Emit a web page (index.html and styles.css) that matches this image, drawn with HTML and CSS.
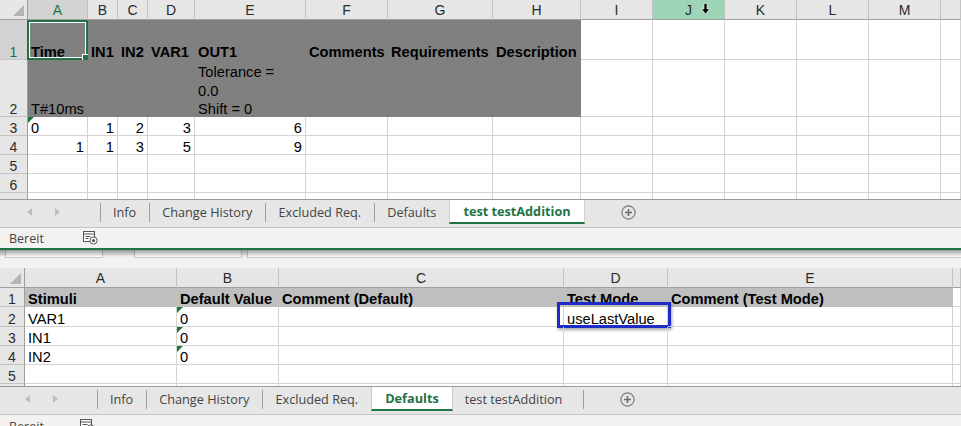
FILE: index.html
```html
<!DOCTYPE html>
<html lang="de">
<head>
<meta charset="utf-8">
<title>Excel</title>
<link rel="stylesheet" href="styles.css">
</head>
<body>
<div class="win win-top">
  <div class="sheet sheet-top">
    <div class="corner"><span class="tri"></span></div>
    <div class="ch act">A</div><div class="ch">B</div><div class="ch">C</div><div class="ch">D</div><div class="ch">E</div><div class="ch">F</div><div class="ch">G</div><div class="ch">H</div><div class="ch">I</div>
    <div class="ch hot">J<svg class="cursor" width="9" height="12" viewBox="0 0 9 12"><path d="M3 0.5h3v5.5h2.5l-4 5-4-5h2.5z" fill="#000" stroke="#fff" stroke-width="0.6"/></svg></div>
    <div class="ch">K</div><div class="ch">L</div><div class="ch">M</div><div class="ch"></div>

    <div class="rh act">1</div>
    <div class="c f b">Time<span class="sel"></span></div><div class="c f b">IN1</div><div class="c f b">IN2</div><div class="c f b">VAR1</div><div class="c f b">OUT1</div><div class="c f b">Comments</div><div class="c f b">Requirements</div><div class="c f b">Description</div>
    <div class="c"></div><div class="c"></div><div class="c"></div><div class="c"></div><div class="c"></div><div class="c"></div>

    <div class="rh">2</div>
    <div class="c f">T#10ms</div><div class="c f"></div><div class="c f"></div><div class="c f"></div><div class="c f wrap"><span>Tolerance =<br>0.0<br>Shift = 0</span></div><div class="c f"></div><div class="c f"></div><div class="c f"></div>
    <div class="c"></div><div class="c"></div><div class="c"></div><div class="c"></div><div class="c"></div><div class="c"></div>

    <div class="rh">3</div>
    <div class="c warn">0</div><div class="c r">1</div><div class="c r">2</div><div class="c r">3</div><div class="c r">6</div>
    <div class="c"></div><div class="c"></div><div class="c"></div><div class="c"></div><div class="c"></div><div class="c"></div><div class="c"></div><div class="c"></div><div class="c"></div>

    <div class="rh">4</div>
    <div class="c r">1</div><div class="c r">1</div><div class="c r">3</div><div class="c r">5</div><div class="c r">9</div>
    <div class="c"></div><div class="c"></div><div class="c"></div><div class="c"></div><div class="c"></div><div class="c"></div><div class="c"></div><div class="c"></div><div class="c"></div>

    <div class="rh">5</div>
    <div class="c"></div><div class="c"></div><div class="c"></div><div class="c"></div><div class="c"></div><div class="c"></div><div class="c"></div><div class="c"></div><div class="c"></div><div class="c"></div><div class="c"></div><div class="c"></div><div class="c"></div><div class="c"></div>

    <div class="rh">6</div>
    <div class="c"></div><div class="c"></div><div class="c"></div><div class="c"></div><div class="c"></div><div class="c"></div><div class="c"></div><div class="c"></div><div class="c"></div><div class="c"></div><div class="c"></div><div class="c"></div><div class="c"></div><div class="c"></div>

    <div class="rh">7</div>
    <div class="c"></div><div class="c"></div><div class="c"></div><div class="c"></div><div class="c"></div><div class="c"></div><div class="c"></div><div class="c"></div><div class="c"></div><div class="c"></div><div class="c"></div><div class="c"></div><div class="c"></div><div class="c"></div>
  </div>

  <div class="tabbar">
    <div class="nav"><span class="arr-l"></span><span class="arr-r"></span></div>
    <span class="sep"></span>
    <div class="tab">Info</div>
    <span class="sep"></span>
    <div class="tab">Change History</div>
    <span class="sep"></span>
    <div class="tab">Excluded Req.</div>
    <span class="sep"></span>
    <div class="tab">Defaults</div>
    <div class="tab on">test testAddition</div>
    <svg class="plus" width="15" height="15" viewBox="0 0 15 15"><circle cx="7.5" cy="7.5" r="6.6" fill="none" stroke="#7b7b7b" stroke-width="1.2"/><path d="M7.5 4v7M4 7.5h7" stroke="#6b6b6b" stroke-width="1.6"/></svg>
  </div>

  <div class="status status-top">
    <span class="st-text">Bereit</span>
    <svg width="15" height="14" viewBox="0 0 15 14"><rect x="0.5" y="0.5" width="11" height="10" fill="#fff" stroke="#555"/><path d="M0.5 3h11M2.5 5.5h5M2.5 7.5h3" stroke="#555"/><circle cx="10.5" cy="9.5" r="3.6" fill="#fff" stroke="#555"/><circle cx="10.5" cy="9.5" r="1.6" fill="#555"/></svg>
  </div>
</div>

<div class="fbar">
  <div class="fbox fbox-name"></div>
  <div class="fbox fbox-mid"></div>
  <div class="fbox fbox-formula"></div>
</div>
<div class="fgap"></div>

<div class="win win-bottom">
  <div class="sheet sheet-bottom">
    <div class="corner"><span class="tri"></span></div>
    <div class="ch">A</div><div class="ch">B</div><div class="ch">C</div><div class="ch">D</div><div class="ch">E</div><div class="ch"></div>

    <div class="rh">1</div>
    <div class="c h b">Stimuli</div><div class="c h b">Default Value</div><div class="c h b">Comment (Default)</div><div class="c h b">Test Mode</div><div class="c h b">Comment (Test Mode)</div><div class="c"></div>

    <div class="rh">2</div>
    <div class="c">VAR1</div><div class="c warn">0</div><div class="c"></div><div class="c">useLastValue<span class="edit"></span></div><div class="c"></div><div class="c"></div>

    <div class="rh">3</div>
    <div class="c">IN1</div><div class="c warn">0</div><div class="c"></div><div class="c"></div><div class="c"></div><div class="c"></div>

    <div class="rh">4</div>
    <div class="c">IN2</div><div class="c warn">0</div><div class="c"></div><div class="c"></div><div class="c"></div><div class="c"></div>

    <div class="rh">5</div>
    <div class="c"></div><div class="c"></div><div class="c"></div><div class="c"></div><div class="c"></div><div class="c"></div>

    <div class="rh">6</div>
    <div class="c"></div><div class="c"></div><div class="c"></div><div class="c"></div><div class="c"></div><div class="c"></div>
  </div>

  <div class="tabbar tabbar-b">
    <div class="nav"><span class="arr-l"></span><span class="arr-r"></span></div>
    <span class="sep"></span>
    <div class="tab">Info</div>
    <span class="sep"></span>
    <div class="tab">Change History</div>
    <span class="sep"></span>
    <div class="tab">Excluded Req.</div>
    <div class="tab on">Defaults</div>
    <div class="tab">test testAddition</div>
    <span class="sep sep-last"></span>
    <svg class="plus" width="15" height="15" viewBox="0 0 15 15"><circle cx="7.5" cy="7.5" r="6.6" fill="none" stroke="#7b7b7b" stroke-width="1.2"/><path d="M7.5 4v7M4 7.5h7" stroke="#6b6b6b" stroke-width="1.6"/></svg>
  </div>

  <div class="status status-b">
    <span class="st-text">Bereit</span>
    <svg width="15" height="14" viewBox="0 0 15 14"><rect x="0.5" y="0.5" width="11" height="10" fill="#fff" stroke="#555"/><path d="M0.5 3h11M2.5 5.5h5M2.5 7.5h3" stroke="#555"/><circle cx="10.5" cy="9.5" r="3.6" fill="#fff" stroke="#555"/><circle cx="10.5" cy="9.5" r="1.6" fill="#555"/></svg>
  </div>
</div>
</body>
</html>
```

FILE: styles.css
```css
* { box-sizing: border-box; }
html, body { margin: 0; padding: 0; }
body {
  width: 961px;
  height: 426px;
  overflow: hidden;
  background: #fff;
  font-family: "Liberation Sans", Arial, sans-serif;
  font-size: 14.67px;
  color: #000;
}

.win { display: flex; flex-direction: column; }

.sheet { display: grid; overflow: hidden; }
.sheet-top {
  height: 199px;
  grid-template-columns: 28px 60px 30px 30px 47px 111px 82px 105px 88px 72px 72px 72px 72px 72px 20px;
  grid-template-rows: 20px 40px 57px 19px 19px 19px 19px 19px;
}
.sheet-bottom {
  height: 118px;
  grid-template-columns: 25px 152px 102px 285px 104px 285px 8px;
  grid-template-rows: 20px 19px 20px 19px 19px 19px 19px;
}

.corner {
  background: #e6e6e6;
  border-right: 1px solid #9e9e9e;
  border-bottom: 1px solid #9e9e9e;
  display: flex;
  align-items: flex-end;
  justify-content: flex-end;
  padding: 0 3px 3px 0;
}
.tri {
  width: 0; height: 0;
  border-left: 11px solid transparent;
  border-bottom: 11px solid #b4b4b4;
}

.ch {
  background: #e6e6e6;
  border-right: 1px solid #c3c3c3;
  border-bottom: 1px solid #9e9e9e;
  display: flex;
  align-items: center;
  justify-content: center;
  font-size: 14px;
  color: #2b2b2b;
  position: relative;
}
.ch.act { background: #d3d3d3; color: #217346; }
.ch.hot { background: #9fd5b7; }
.cursor { position: absolute; left: 48px; top: 3px; }

.rh {
  background: #e6e6e6;
  border-right: 1px solid #9e9e9e;
  border-bottom: 1px solid #c3c3c3;
  display: flex;
  align-items: flex-end;
  justify-content: center;
  font-size: 14px;
  line-height: 13px;
  color: #2b2b2b;
}
.rh.act { background: #d3d3d3; color: #217346; }

.c {
  border-right: 1px solid #d4d4d4;
  border-bottom: 1px solid #d4d4d4;
  display: flex;
  align-items: flex-end;
  padding: 0 3px;
  line-height: 13px;
  white-space: nowrap;
  position: relative;
}
.c.r { justify-content: flex-end; }
.c.b { font-weight: bold; }
.c.f { background: #808080; border-color: #808080; }
.c.h { background: #bfbfbf; border-color: #bfbfbf; }
.c.wrap { white-space: normal; line-height: 18.7px; }
.c.wrap span { margin-bottom: -3px; }

.warn::before {
  content: "";
  position: absolute;
  left: 0; top: 0;
  border-top: 6px solid #1e7a3a;
  border-right: 6px solid transparent;
}

.sel {
  position: absolute;
  left: -1px; top: 0; right: -1px; bottom: -1px;
  border: 2px solid #217346;
  box-shadow: inset 0 0 0 1px #fff;
}
.sel::after {
  content: "";
  position: absolute;
  right: -5px; bottom: -5px;
  width: 7px; height: 7px;
  background: #217346;
  border: 1px solid #fff;
}

.edit {
  position: absolute;
  left: -7px; top: -5px; right: -4px; bottom: -2px;
  border: 3px solid #1c2cc4;
  box-shadow: 1px 2px 3px rgba(0, 0, 0, 0.35);
}

.tabbar {
  height: 29px;
  background: #e6e6e6;
  border-top: 1px solid #9b9b9b;
  border-bottom: 1px solid #c6c6c6;
  padding-bottom: 3px;
  display: flex;
  align-items: stretch;
  font-family: "Open Sans", "Noto Sans", sans-serif;
  font-size: 12.7px;
  color: #444;
}
.nav {
  width: 100px;
  display: flex;
  align-items: center;
  gap: 23px;
  padding-left: 27px;
}
.tabbar-b .nav { width: 97px; padding-left: 25px; }
.arr-l {
  width: 0; height: 0;
  border-top: 4px solid transparent;
  border-bottom: 4px solid transparent;
  border-right: 5px solid #bdbdbd;
}
.arr-r {
  width: 0; height: 0;
  border-top: 4px solid transparent;
  border-bottom: 4px solid transparent;
  border-left: 5px solid #bdbdbd;
}
.sep {
  width: 1px;
  height: 19px;
  align-self: center;
  background: #9f9f9f;
}
.tab {
  display: flex;
  align-items: center;
  padding: 0 13px 0 12px;
  white-space: nowrap;
}
.tab.on {
  background: #fff;
  color: #217346;
  font-weight: bold;
  padding: 0 13px;
  border-left: 1px solid #cfcfcf;
  border-right: 1px solid #cfcfcf;
  border-bottom: 2px solid #217346;
}
.plus { align-self: center; margin-left: 36px; }
.tabbar-b .sep-last { margin-left: 8px; }

.status {
  height: 22px;
  background: #f3f2f1;
  display: flex;
  align-items: center;
  padding-left: 9px;
  font-family: "Open Sans", "Noto Sans", sans-serif;
  font-size: 12.5px;
  color: #444;
}
.status-top { border-bottom: 2px solid #217346; }
.st-text { width: 74px; }
.status-b .st-text { width: 71px; }

.fbar {
  height: 8px;
  background: #f3f2f1;
  display: flex;
  position: relative;
}
.fbar::after {
  content: "";
  position: absolute;
  left: 0; right: 0; top: 0;
  height: 7px;
  background: linear-gradient(rgba(0, 0, 0, 0.38), rgba(0, 0, 0, 0));
}
.fbox {
  background: #fff;
  border: 1px solid #c6c6c6;
  border-top: none;
}
.fbox-name { margin-left: 5px; width: 98px; }
.fbox-mid { margin-left: 31px; width: 108px; }
.fbox-formula { margin-left: 5px; flex: 1; border-right: none; }
.fgap { height: 10px; background: #f3f2f1; }
```
